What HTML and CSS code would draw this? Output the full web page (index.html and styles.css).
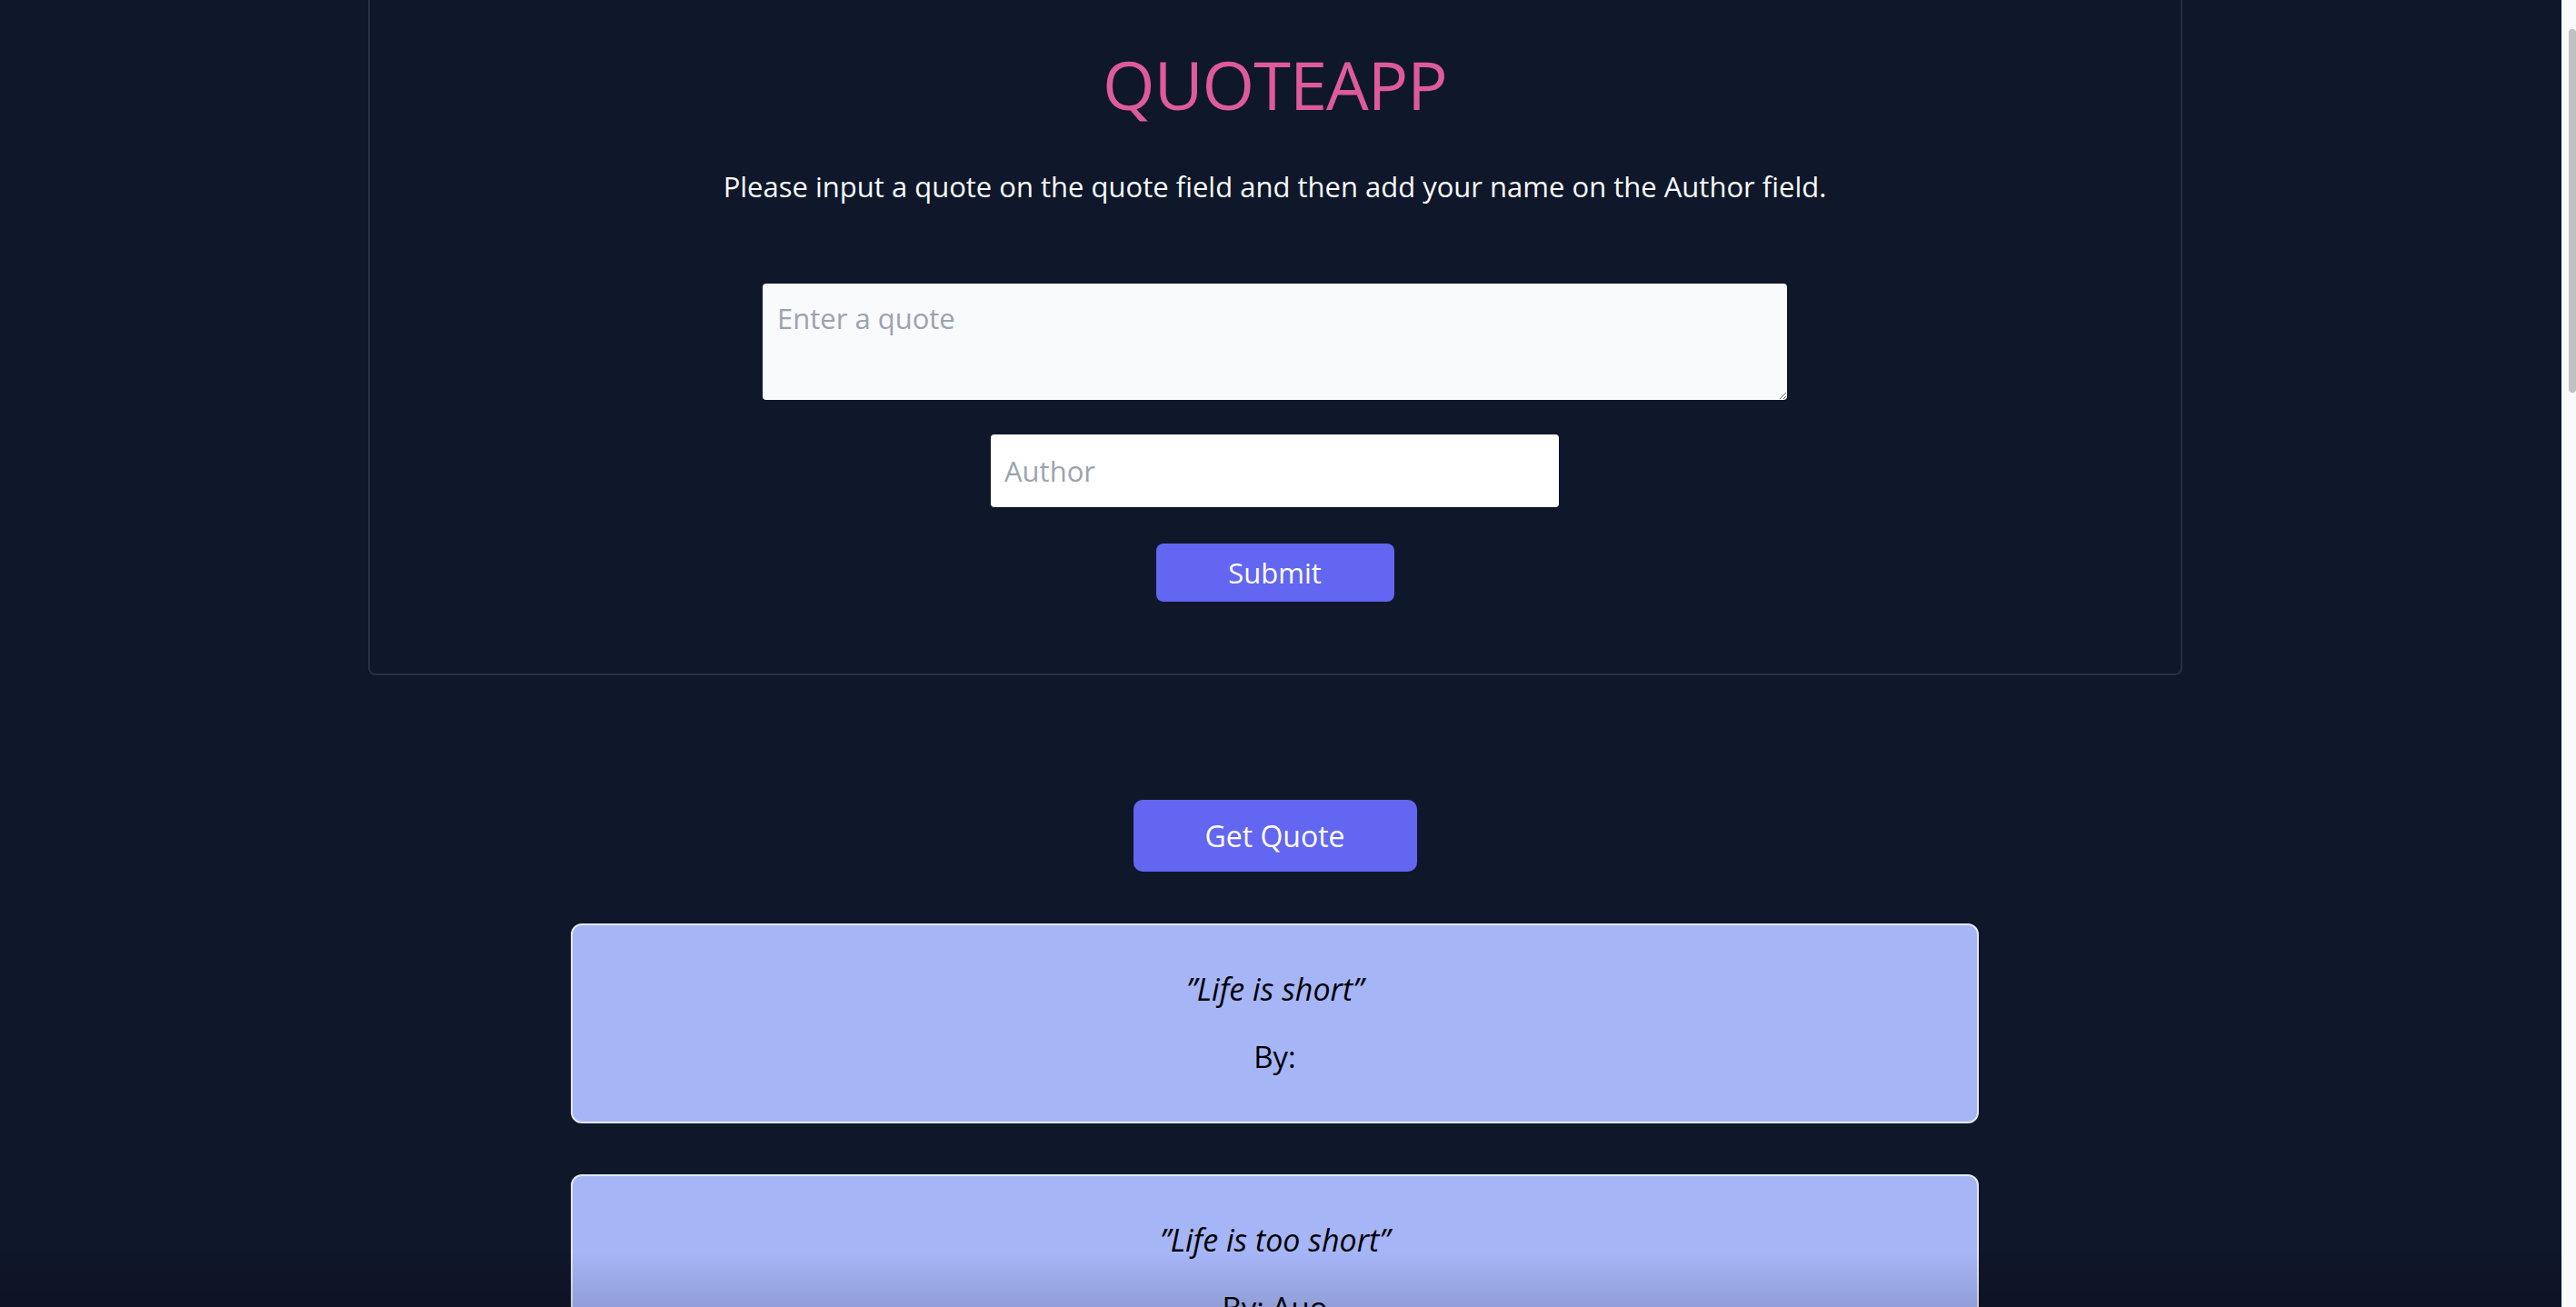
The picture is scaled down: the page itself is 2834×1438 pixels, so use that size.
FILE: index.html
```html
<!DOCTYPE html>
<html lang="en">
<head>
<meta charset="utf-8">
<title>QuoteApp</title>
<link rel="stylesheet" href="styles.css">
</head>
<body>
<div class="page">
  <section class="panel">
    <h1 class="title">QUOTEAPP</h1>
    <p class="intro">Please input a quote on the quote field and then add your name on the Author field.</p>
    <form class="form">
      <textarea class="quote-input" placeholder="Enter a quote"></textarea>
      <input class="author-input" type="text" placeholder="Author">
      <button class="btn submit" type="button">Submit</button>
    </form>
  </section>
  <div class="actions">
    <button class="btn get" type="button">Get Quote</button>
  </div>
  <div class="quotes">
    <article class="quote-card">
      <p class="quote-text">”Life is short”</p>
      <p class="quote-author">By:</p>
    </article>
    <article class="quote-card">
      <p class="quote-text">”Life is too short”</p>
      <p class="quote-author">By: Auo</p>
    </article>
  </div>
</div>
<div class="fade"></div>
<div class="scrollbar"><div class="scrollbar-thumb"></div></div>
<script src="script.js"></script>
</body>
</html>
```
FILE: styles.css
```css
html {
  overflow-y: scroll;
}
body {
  margin: 0;
  background: #0f172a;
  color: #f8fafc;
  font-family: "Open Sans", "Noto Sans", sans-serif;
}
.page {
  box-sizing: border-box;
  min-height: 5170px;
  padding: 32px 29px 0 0;
}
.panel {
  box-sizing: border-box;
  width: 1996px;
  margin: 0 auto;
  border: 2px solid #253044;
  border-radius: 8px;
  padding: 137px 0 79px;
  display: flex;
  flex-direction: column;
  align-items: center;
}
.title {
  margin: 0;
  font-size: 74px;
  line-height: 1;
  font-weight: 400;
  letter-spacing: -1px;
  color: #de5b9b;
}
.intro {
  margin: 52px 0 0;
  font-size: 31px;
  line-height: 1.5;
}
.form {
  margin-top: 83px;
  display: flex;
  flex-direction: column;
  align-items: center;
}
.quote-input {
  box-sizing: border-box;
  width: 1127px;
  height: 128px;
  padding: 15px 16px;
  border: none;
  border-radius: 4px;
  background: #f8fafc;
  font-family: inherit;
  font-size: 31px;
  line-height: 1.5;
  resize: vertical;
  display: block;
}
.author-input {
  box-sizing: border-box;
  margin-top: 38px;
  width: 625px;
  height: 80px;
  padding: 0 15px;
  border: none;
  border-radius: 4px;
  background: #ffffff;
  font-family: inherit;
  font-size: 31px;
}
.quote-input::placeholder,
.author-input::placeholder {
  color: #9ca3af;
}
.btn {
  background: #6366f1;
  color: #ffffff;
  border: none;
  font-family: inherit;
  padding: 0;
  cursor: pointer;
}
.submit {
  margin-top: 40px;
  width: 262px;
  height: 64px;
  border-radius: 8px;
  font-size: 31px;
}
.actions {
  display: flex;
  justify-content: center;
  margin-top: 137px;
}
.get {
  width: 312px;
  height: 79px;
  border-radius: 10px;
  font-size: 32px;
}
.quotes {
  margin-top: 57px;
  display: flex;
  flex-direction: column;
  align-items: center;
  gap: 56px;
}
.quote-card {
  box-sizing: border-box;
  width: 1549px;
  height: 220px;
  border: 2px solid #e2e8f0;
  border-radius: 12px;
  background: #a6b5f6;
  color: #000000;
  display: flex;
  flex-direction: column;
  align-items: center;
  justify-content: center;
  gap: 29px;
}
.quote-text {
  margin: 0;
  font-style: italic;
  font-size: 34px;
  line-height: 45px;
}
.quote-author {
  margin: 0;
  font-size: 33px;
  line-height: 45px;
}
.fade {
  position: fixed;
  left: 0;
  right: 0;
  bottom: 0;
  height: 60px;
  background: linear-gradient(to bottom, rgba(0, 0, 0, 0), rgba(0, 0, 0, 0.12));
  pointer-events: none;
}
.scrollbar {
  position: fixed;
  top: 0;
  right: 0;
  bottom: 0;
  width: 16px;
  background: #fafafa;
  border-left: 1px solid #f0f0f0;
  box-sizing: border-box;
}
.scrollbar-thumb {
  position: absolute;
  top: 32px;
  left: 7px;
  width: 8px;
  height: 400px;
  border-radius: 4px;
  background: #c1c1c1;
}
```
FILE: script.js
```js
function jump() { window.scrollTo(0, 115); }
jump();
document.addEventListener('DOMContentLoaded', jump);
window.addEventListener('load', jump);
```
